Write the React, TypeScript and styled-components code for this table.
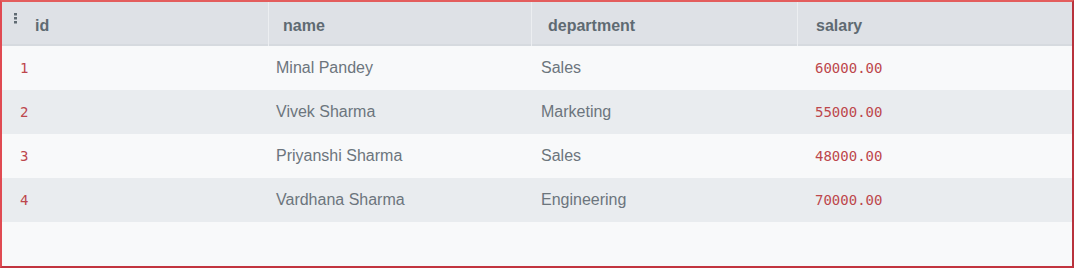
import React from 'react'
import styled, { createGlobalStyle } from 'styled-components'

interface Employee {
    id: number
    name: string
    department: string
    salary: string
}

const employees: Employee[] = [
    { id: 1, name: 'Minal Pandey', department: 'Sales', salary: '60000.00' },
    { id: 2, name: 'Vivek Sharma', department: 'Marketing', salary: '55000.00' },
    { id: 3, name: 'Priyanshi Sharma', department: 'Sales', salary: '48000.00' },
    { id: 4, name: 'Vardhana Sharma', department: 'Engineering', salary: '70000.00' },
]

// column widths and text insets, header and body differ slightly
const columns = [
    { key: 'id', width: 266, head: 33, body: 18, mono: true },
    { key: 'name', width: 263, head: 14, body: 8, mono: false },
    { key: 'department', width: 266, head: 16, body: 10, mono: false },
    { key: 'salary', width: 275, head: 18, body: 18, mono: true },
]

const GlobalStyle = createGlobalStyle`
    html, body {
        margin: 0;
        padding: 0;
        background: #f8f9fa;
    }
    body {
        font-family: "Liberation Sans", Arial, sans-serif;
    }
`

const Frame = styled.div`
    width: 1074px;
    height: 268px;
    box-sizing: border-box;
    border: 2px solid;
    border-color: #e35d5d #b8323c #c2343f #e04a52;
    background: #f8f9fa;
    display: flex;
    flex-direction: column;
`

const Row = styled.div<{ $bg: string }>`
    display: grid;
    grid-template-columns: ${columns.map(c => c.width + 'px').join(' ')};
    height: 44px;
    background: ${p => p.$bg};
`

const HeadRow = styled(Row)`
    box-shadow: inset 0 -2px 0 #d6dadf;
`

const HeadCell = styled.div<{ $pad: number; $first: boolean }>`
    position: relative;
    display: flex;
    align-items: center;
    padding-left: ${p => p.$pad}px;
    padding-top: 3px;
    font-size: 16px;
    font-weight: bold;
    color: #5f6a72;
    border-left: ${p => (p.$first ? 'none' : '1px solid #eceef1')};
`

const DragHandle = styled.svg`
    position: absolute;
    left: 12px;
    top: 10px;
`

const Cell = styled.div<{ $pad: number; $mono: boolean }>`
    display: flex;
    align-items: center;
    padding-left: ${p => p.$pad}px;
    font-family: ${p => (p.$mono ? '"DejaVu Sans Mono", "Liberation Mono", monospace' : '"Liberation Sans", Arial, sans-serif')};
    font-size: ${p => (p.$mono ? '14px' : '16px')};
    color: ${p => (p.$mono ? '#bd474c' : '#6c757d')};
`

const Filler = styled.div`
    flex: 1;
    background: #f8f9fa;
`

export default function App() {
    return (
        <>
            <GlobalStyle />
            <Frame>
                <HeadRow $bg='#dee1e6'>
                    {columns.map((c, i) => (
                        <HeadCell key={c.key} $pad={c.head} $first={i === 0}>
                            {i === 0 && (
                                <DragHandle width='4' height='12' viewBox='0 0 4 12'>
                                    <rect x='0' y='1' width='3' height='2.5' fill='#5f6a72' />
                                    <rect x='0' y='5' width='3' height='2.5' fill='#5f6a72' />
                                    <rect x='0' y='9' width='3' height='2.5' fill='#5f6a72' />
                                </DragHandle>
                            )}
                            {c.key}
                        </HeadCell>
                    ))}
                </HeadRow>
                {employees.map((e, i) => (
                    <Row key={e.id} $bg={i % 2 === 0 ? '#f8f9fa' : '#e9ecef'}>
                        {columns.map(c => (
                            <Cell key={c.key} $pad={c.body} $mono={c.mono}>
                                {e[c.key as keyof Employee]}
                            </Cell>
                        ))}
                    </Row>
                ))}
                <Filler />
            </Frame>
        </>
    )
}
